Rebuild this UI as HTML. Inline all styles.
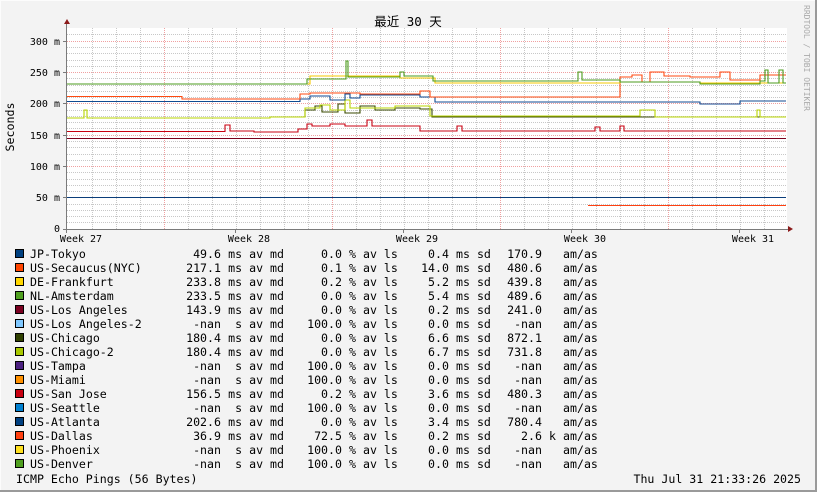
<!DOCTYPE html>
<html><head><meta charset="utf-8"><style>
html,body{margin:0;padding:0;background:#f3f3f3;}
svg{display:block;}
text{font-family:"DejaVu Sans Mono","Liberation Mono","Noto Sans CJK SC",monospace;font-size:11.6px;fill:#000;}
.ax{font-size:10px;}
</style></head><body>
<svg width="817" height="492" viewBox="0 0 817 492" xmlns="http://www.w3.org/2000/svg">
<rect x="0" y="0" width="817" height="492" fill="#f3f3f3"/>
<rect x="0" y="0" width="817" height="1" fill="#fcfcfc"/>
<rect x="0" y="0" width="1" height="492" fill="#fcfcfc"/>
<rect x="815" y="0" width="2" height="492" fill="#9a9a9a"/>
<rect x="0" y="490" width="817" height="2" fill="#9a9a9a"/>
<rect x="67" y="28" width="720" height="201" fill="#ffffff"/>
<g shape-rendering="crispEdges" stroke-width="1" fill="none">
<g stroke="#c8c8c8" stroke-dasharray="1,1">
<path d="M67 222.5H786M67 216.5H786M67 210.5H786M67 204.5H786M67 191.5H786M67 185.5H786M67 179.5H786M67 172.5H786M67 160.5H786M67 154.5H786M67 147.5H786M67 141.5H786M67 128.5H786M67 122.5H786M67 116.5H786M67 110.5H786M67 97.5H786M67 91.5H786M67 85.5H786M67 78.5H786M67 66.5H786M67 60.5H786M67 53.5H786M67 47.5H786M67 34.5H786"/>
<path d="M92.5 28V229M116.5 28V229M140.5 28V229M188.5 28V229M212.5 28V229M236.5 28V229M260.5 28V229M284.5 28V229M308.5 28V229M356.5 28V229M380.5 28V229M404.5 28V229M428.5 28V229M452.5 28V229M476.5 28V229M524.5 28V229M548.5 28V229M572.5 28V229M596.5 28V229M620.5 28V229M644.5 28V229M692.5 28V229M716.5 28V229M740.5 28V229M764.5 28V229"/>
</g>
<g stroke="#f0a0a0" stroke-dasharray="1,1">
<path d="M67 197.5H786M67 166.5H786M67 135.5H786M67 103.5H786M67 72.5H786M67 41.5H786"/>
<path d="M164.5 28V229M332.5 28V229M500.5 28V229M668.5 28V229"/>
</g>
</g>
<g fill="none" stroke-width="1.1" stroke-linejoin="miter">
<path stroke="#0a3d7a" d="M67 197.5H786"/>
<path stroke="#ff4010" d="M588 205.5H786"/>
<path stroke="#7a001c" d="M67 138.5H786"/>
<path stroke="#c80010" d="M67 131.5H225V125H230V131H254V132H298V129H307V124H312V126H330V124H345V126H367V120H372V126H420V131H457V126H462V131H595V127H600V131H620V126H624V131H786"/>
<path stroke="#3a4a00" d="M270 117H305V110H315V106H322V112H338V104H345V113H360V106H375V110H395V108H420V109H432V117H786"/>
<path stroke="#b8d400" d="M67 118H84V110H87V118H270V117H305V108H320V105H330V110H345V100H350V108H395V106H430V116H640V110H655V117H757V110H760V117H786"/>
<path stroke="#104a90" d="M67 101.5H300V99H310V96H330V100H345V94H350V98H360V95H420V97H435V102H700V104H740V101H786"/>
<path stroke="#ff4a10" d="M67 96.5H182V99H300V94H310V93H360V94H420V91H430V97H620V77H632V75H642V82H650V72H664V76H690V77H720V72H730V80H760V75H786"/>
<path stroke="#f5c800" d="M67 84H310V76H400V78H435V83H620V82H700V83H786"/>
<path stroke="#4b9b1c" d="M67 84H307V79H346V61H348V77H400V72H404V76H433V81H578V72H582V80H620V82H700V84H760V81H765V70H768V83H779V70H783V83H786"/>
</g>
<g shape-rendering="crispEdges">
<rect x="66" y="24" width="1" height="205" fill="#7a7a7a"/>
<rect x="63" y="229" width="726" height="1" fill="#7a7a7a"/>
<rect x="63" y="41" width="4" height="1" fill="#7a7a7a"/><rect x="63" y="72" width="4" height="1" fill="#7a7a7a"/><rect x="63" y="103" width="4" height="1" fill="#7a7a7a"/><rect x="63" y="135" width="4" height="1" fill="#7a7a7a"/><rect x="63" y="166" width="4" height="1" fill="#7a7a7a"/><rect x="63" y="197" width="4" height="1" fill="#7a7a7a"/>
<rect x="235" y="229" width="1" height="4" fill="#7a7a7a"/><rect x="403" y="229" width="1" height="4" fill="#7a7a7a"/><rect x="571" y="229" width="1" height="4" fill="#7a7a7a"/><rect x="739" y="229" width="1" height="4" fill="#7a7a7a"/><rect x="66" y="229" width="1" height="4" fill="#7a7a7a"/>
</g>
<path d="M64 24L67 19L70 24Z" fill="#8b1a1a"/>
<path d="M788 226L793 229L788 232Z" fill="#8b1a1a"/>
<text x="408" y="26" text-anchor="middle" style="font-size:12.5px">最近 30 天</text>
<g text-anchor="end" class="ax">
<text class="ax" x="60" y="45">300 m</text><text class="ax" x="60" y="76">250 m</text><text class="ax" x="60" y="107">200 m</text><text class="ax" x="60" y="139">150 m</text><text class="ax" x="60" y="170">100 m</text><text class="ax" x="60" y="201">50 m</text><text class="ax" x="60" y="232">0</text>
</g>
<text transform="translate(14,127) rotate(-90)" text-anchor="middle">Seconds</text>
<g text-anchor="middle"><text class="ax" x="81" y="242">Week 27</text><text class="ax" x="249" y="242">Week 28</text><text class="ax" x="417" y="242">Week 29</text><text class="ax" x="585" y="242">Week 30</text><text class="ax" x="753" y="242">Week 31</text></g>
<text transform="translate(804,5) rotate(90)" style="font-size:8px;fill:#aaaaaa">RRDTOOL / TOBI OETIKER</text>
<g shape-rendering="crispEdges" stroke="#000" stroke-width="1">
<rect x="15.5" y="249.5" width="8" height="8" fill="#004080"/>
<rect x="15.5" y="263.5" width="8" height="8" fill="#ff4500"/>
<rect x="15.5" y="277.5" width="8" height="8" fill="#ffd700"/>
<rect x="15.5" y="291.5" width="8" height="8" fill="#50a020"/>
<rect x="15.5" y="305.5" width="8" height="8" fill="#7a0020"/>
<rect x="15.5" y="319.5" width="8" height="8" fill="#80c8ff"/>
<rect x="15.5" y="333.5" width="8" height="8" fill="#2f4000"/>
<rect x="15.5" y="347.5" width="8" height="8" fill="#a8c800"/>
<rect x="15.5" y="361.5" width="8" height="8" fill="#4b2080"/>
<rect x="15.5" y="375.5" width="8" height="8" fill="#ff9000"/>
<rect x="15.5" y="389.5" width="8" height="8" fill="#c80010"/>
<rect x="15.5" y="403.5" width="8" height="8" fill="#0080d0"/>
<rect x="15.5" y="417.5" width="8" height="8" fill="#004080"/>
<rect x="15.5" y="431.5" width="8" height="8" fill="#ff4010"/>
<rect x="15.5" y="445.5" width="8" height="8" fill="#ffe020"/>
<rect x="15.5" y="459.5" width="8" height="8" fill="#50a020"/>
</g>
<g xml:space="preserve">
<text x="30" y="258">JP-Tokyo</text><text x="30" y="272">US-Secaucus(NYC)</text><text x="30" y="286">DE-Frankfurt</text><text x="30" y="300">NL-Amsterdam</text><text x="30" y="314">US-Los Angeles</text><text x="30" y="328">US-Los Angeles-2</text><text x="30" y="342">US-Chicago</text><text x="30" y="356">US-Chicago-2</text><text x="30" y="370">US-Tampa</text><text x="30" y="384">US-Miami</text><text x="30" y="398">US-San Jose</text><text x="30" y="412">US-Seattle</text><text x="30" y="426">US-Atlanta</text><text x="30" y="440">US-Dallas</text><text x="30" y="454">US-Phoenix</text><text x="30" y="468">US-Denver</text>
</g>
<g text-anchor="end">
<text x="221" y="258">49.6</text><text x="221" y="272">217.1</text><text x="221" y="286">233.8</text><text x="221" y="300">233.5</text><text x="221" y="314">143.9</text><text x="221" y="328">-nan</text><text x="221" y="342">180.4</text><text x="221" y="356">180.4</text><text x="221" y="370">-nan</text><text x="221" y="384">-nan</text><text x="221" y="398">156.5</text><text x="221" y="412">-nan</text><text x="221" y="426">202.6</text><text x="221" y="440">36.9</text><text x="221" y="454">-nan</text><text x="221" y="468">-nan</text>
<text x="284" y="258">ms av md</text><text x="284" y="272">ms av md</text><text x="284" y="286">ms av md</text><text x="284" y="300">ms av md</text><text x="284" y="314">ms av md</text><text x="284" y="328">s av md</text><text x="284" y="342">ms av md</text><text x="284" y="356">ms av md</text><text x="284" y="370">s av md</text><text x="284" y="384">s av md</text><text x="284" y="398">ms av md</text><text x="284" y="412">s av md</text><text x="284" y="426">ms av md</text><text x="284" y="440">ms av md</text><text x="284" y="454">s av md</text><text x="284" y="468">s av md</text>
<text x="342" y="258">0.0</text><text x="342" y="272">0.1</text><text x="342" y="286">0.2</text><text x="342" y="300">0.0</text><text x="342" y="314">0.0</text><text x="342" y="328">100.0</text><text x="342" y="342">0.0</text><text x="342" y="356">0.0</text><text x="342" y="370">100.0</text><text x="342" y="384">100.0</text><text x="342" y="398">0.2</text><text x="342" y="412">100.0</text><text x="342" y="426">0.0</text><text x="342" y="440">72.5</text><text x="342" y="454">100.0</text><text x="342" y="468">100.0</text>
<text x="449" y="258">0.4</text><text x="449" y="272">14.0</text><text x="449" y="286">5.2</text><text x="449" y="300">5.4</text><text x="449" y="314">0.2</text><text x="449" y="328">0.0</text><text x="449" y="342">6.6</text><text x="449" y="356">6.7</text><text x="449" y="370">0.0</text><text x="449" y="384">0.0</text><text x="449" y="398">3.6</text><text x="449" y="412">0.0</text><text x="449" y="426">3.4</text><text x="449" y="440">0.2</text><text x="449" y="454">0.0</text><text x="449" y="468">0.0</text>
<text x="542" y="258">170.9</text><text x="542" y="272">480.6</text><text x="542" y="286">439.8</text><text x="542" y="300">489.6</text><text x="542" y="314">241.0</text><text x="542" y="328">-nan</text><text x="542" y="342">872.1</text><text x="542" y="356">731.8</text><text x="542" y="370">-nan</text><text x="542" y="384">-nan</text><text x="542" y="398">480.3</text><text x="542" y="412">-nan</text><text x="542" y="426">780.4</text><text x="542" y="440">2.6</text><text x="542" y="454">-nan</text><text x="542" y="468">-nan</text>
<text x="801" y="483">Thu Jul 31 21:33:26 2025</text>
</g>
<g>
<text x="349" y="258">% av ls</text><text x="349" y="272">% av ls</text><text x="349" y="286">% av ls</text><text x="349" y="300">% av ls</text><text x="349" y="314">% av ls</text><text x="349" y="328">% av ls</text><text x="349" y="342">% av ls</text><text x="349" y="356">% av ls</text><text x="349" y="370">% av ls</text><text x="349" y="384">% av ls</text><text x="349" y="398">% av ls</text><text x="349" y="412">% av ls</text><text x="349" y="426">% av ls</text><text x="349" y="440">% av ls</text><text x="349" y="454">% av ls</text><text x="349" y="468">% av ls</text>
<text x="456" y="258">ms sd</text><text x="456" y="272">ms sd</text><text x="456" y="286">ms sd</text><text x="456" y="300">ms sd</text><text x="456" y="314">ms sd</text><text x="456" y="328">ms sd</text><text x="456" y="342">ms sd</text><text x="456" y="356">ms sd</text><text x="456" y="370">ms sd</text><text x="456" y="384">ms sd</text><text x="456" y="398">ms sd</text><text x="456" y="412">ms sd</text><text x="456" y="426">ms sd</text><text x="456" y="440">ms sd</text><text x="456" y="454">ms sd</text><text x="456" y="468">ms sd</text>
<text x="549" y="440">k</text>
<text x="563" y="258">am/as</text><text x="563" y="272">am/as</text><text x="563" y="286">am/as</text><text x="563" y="300">am/as</text><text x="563" y="314">am/as</text><text x="563" y="328">am/as</text><text x="563" y="342">am/as</text><text x="563" y="356">am/as</text><text x="563" y="370">am/as</text><text x="563" y="384">am/as</text><text x="563" y="398">am/as</text><text x="563" y="412">am/as</text><text x="563" y="426">am/as</text><text x="563" y="440">am/as</text><text x="563" y="454">am/as</text><text x="563" y="468">am/as</text>
<text x="16" y="483">ICMP Echo Pings (56 Bytes)</text>
</g>
</svg>
</body></html>
